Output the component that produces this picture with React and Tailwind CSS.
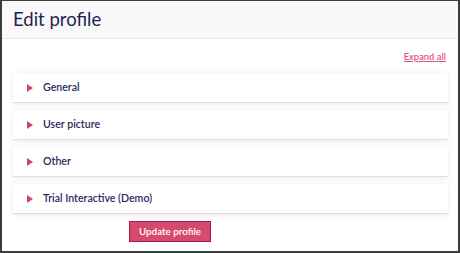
import React from "react";

const sections = ["General", "User picture", "Other", "Trial Interactive (Demo)"];

const Section = ({ title }) => (
  <div className="flex h-[30px] items-center border-b border-[#f5d3dc] bg-white shadow-[0_1px_6px_rgba(0,0,0,0.09)]">
    <svg width="6" height="8" viewBox="0 0 6 8" className="ml-[14px]">
      <path d="M0 0 L6 4 L0 8 Z" fill="#d6436a" />
    </svg>
    <span className="ml-[10px] text-[10.6px] font-semibold text-[#2a2a5c]">{title}</span>
  </div>
);

const App = () => {
  return (
    <div
      className="box-border h-[253px] w-[460px] border-b-2 border-l-2 border-r-2 border-t border-[#3c3c3c] bg-white"
      style={{ fontFamily: 'Lato, "Open Sans", sans-serif' }}
    >
      <div className="flex h-[38px] items-center border-b border-[#f8e1e7] bg-[#f9f9f9] pl-[11px]">
        <h1 className="text-[18.5px] font-normal text-[#1f1f55]">Edit profile</h1>
      </div>

      <div className="px-[11px] pr-[10px]">
        <div className="mt-[11px] flex justify-end pr-[2px]">
          <a href="#" className="text-[9.4px] font-semibold leading-[14px] text-[#e05a7c] underline">
            Expand all
          </a>
        </div>

        <div className="mt-[9px] flex flex-col gap-[7px]">
          {sections.map((s) => (
            <Section key={s} title={s} />
          ))}
        </div>

        <div className="mt-[7px] flex pl-[116px]">
          <button className="h-[21px] w-[82px] border border-[#9c2040] bg-[#d64b6d] text-[9.8px] font-semibold text-white">
            Update profile
          </button>
        </div>
      </div>
    </div>
  );
};

export default App;
